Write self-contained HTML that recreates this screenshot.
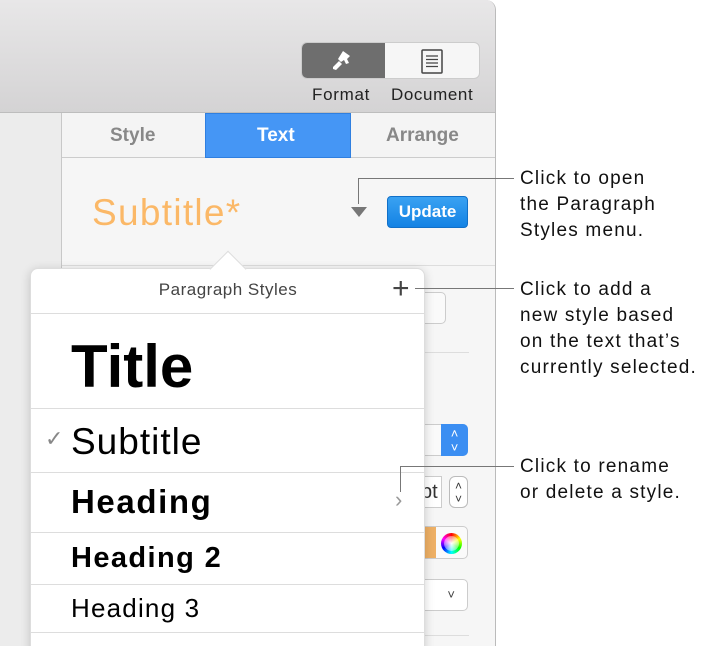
<!DOCTYPE html>
<html><head><style>
*{margin:0;padding:0;box-sizing:border-box}
html,body{width:702px;height:646px;overflow:hidden}
body{background:#fff;position:relative;font-family:"Liberation Sans",sans-serif}
.a{position:absolute}
.ann{position:absolute;left:520px;font-size:19px;line-height:26px;color:#111;letter-spacing:1.2px}
.ln{position:absolute;background:#777}
.row{position:absolute;left:0;width:394px;border-top:1px solid #ddd;color:#000}
</style></head><body>
<div class="a" style="left:0;top:0;width:496px;height:646px;border-right:1px solid #bbb;border-top-right-radius:10px;overflow:hidden;background:#ececec">
 <div class="a" style="left:0;top:0;width:496px;height:113px;background:linear-gradient(#e8e7e8,#d4d3d4);border-bottom:1px solid #bdbdbd"></div>
 <div class="a" style="left:301px;top:42px;width:179px;height:37px;border-radius:6px;background:#f6f6f6;border:1px solid #ccc;overflow:hidden">
  <div class="a" style="left:0;top:0;width:83px;height:37px;background:#6e6e6e"></div>
  <svg class="a" style="left:28px;top:6px" width="26" height="24" viewBox="0 0 26 24"><path d="M13 2l7 5-3 3 2 4-3 1-2-4-3 2-3-3zM9 12l3 3-6 6-3-1 0-2z" fill="#fff"/></svg>
  <svg class="a" style="left:118px;top:5px" width="24" height="28" viewBox="0 0 24 28"><rect x="2" y="2" width="20" height="23" fill="none" stroke="#444" stroke-width="1.5" rx="1"/><path d="M6 8h12M6 11.5h12M6 15h12M6 18.5h12" stroke="#444" stroke-width="1.3"/></svg>
 </div>
 <div class="a" style="left:312px;top:85px;font-size:17px;color:#222;letter-spacing:0.7px">Format</div>
 <div class="a" style="left:391px;top:85px;font-size:17px;color:#222;letter-spacing:0.6px">Document</div>
 <div class="a" style="left:61px;top:113px;width:435px;height:533px;background:#f6f6f6;border-left:1px solid #c8c8c8"></div>
 <div class="a" style="left:62px;top:113px;width:434px;height:45px;background:#f4f4f4;border-bottom:1px solid #ccc"></div>
 <div class="a" style="left:110px;top:125px;font-size:19px;font-weight:bold;color:#888">Style</div>
 <div class="a" style="left:205px;top:113px;width:146px;height:45px;background:#4596f5;border:1px solid #2f7fe0"></div>
 <div class="a" style="left:257px;top:125px;font-size:19px;font-weight:bold;color:#fff">Text</div>
 <div class="a" style="left:386px;top:125px;font-size:19px;font-weight:bold;color:#888">Arrange</div>
 <div class="a" style="left:92px;top:192px;font-size:37px;color:#fbb867;letter-spacing:1.3px">Subtitle*</div>
 <div class="a" style="left:351px;top:207px;width:0;height:0;border-left:8px solid transparent;border-right:8px solid transparent;border-top:10px solid #777"></div>
 <div class="a" style="left:387px;top:196px;width:81px;height:32px;border-radius:4px;background:linear-gradient(#3aa2f2,#1382e4);border:1px solid #1170c8;color:#fff;font-weight:bold;font-size:17px;text-align:center;line-height:30px">Update</div>
 <div class="a" style="left:62px;top:265px;width:434px;height:1px;background:#ddd"></div>
 <div class="a" style="left:415px;top:292px;width:31px;height:32px;border:1px solid #ccc;border-radius:5px;background:#fafafa"></div>
 <div class="a" style="left:424px;top:352px;width:45px;height:1px;background:#ddd"></div>
 <div class="a" style="left:420px;top:424px;width:48px;height:32px;border:1px solid #ccc;border-radius:5px;background:#fafafa"></div>
 <div class="a" style="left:441px;top:424px;width:27px;height:32px;border-radius:0 5px 5px 0;background:#3b8ef2;color:#fff;font-size:13px;text-align:center;line-height:14px;padding-top:3px">&#708;<br>&#709;</div>
 <div class="a" style="left:420px;top:476px;width:22px;height:32px;border:1px solid #ccc;background:#fff;font-size:20px;line-height:30px;color:#333">pt</div>
 <div class="a" style="left:449px;top:476px;width:19px;height:32px;border:1px solid #bbb;border-radius:6px;background:#fff;font-size:12px;text-align:center;line-height:13px;padding-top:3px;color:#333">&#708;<br>&#709;</div>
 <div class="a" style="left:420px;top:526px;width:48px;height:33px;border:1px solid #ccc;border-radius:5px;background:#fafafa;overflow:hidden"><div class="a" style="left:0;top:0;width:15px;height:33px;background:#eeb065"></div></div>
 <div class="a" style="left:441px;top:533px;width:21px;height:21px;border-radius:50%;background:conic-gradient(red,yellow,lime,cyan,blue,magenta,red)"><div class="a" style="left:3px;top:3px;width:15px;height:15px;border-radius:50%;background:radial-gradient(#fff,rgba(255,255,255,.2))"></div></div>
 <div class="a" style="left:420px;top:579px;width:48px;height:32px;border:1px solid #ccc;border-radius:5px;background:#fff;font-size:13px;text-align:right;padding-right:12px;line-height:30px;color:#444">&#709;</div>
 <div class="a" style="left:424px;top:635px;width:45px;height:1px;background:#ddd"></div>
</div>
<div class="a" style="left:30px;top:268px;width:395px;height:390px;background:#fff;border:1px solid #ddd;border-radius:8px;box-shadow:0 2px 10px rgba(0,0,0,.18)">
 <div class="a" style="left:0;top:11px;width:394px;text-align:center;font-size:17px;color:#444;letter-spacing:0.5px">Paragraph Styles</div>
 <div class="a" style="left:361px;top:5px;font-size:30px;line-height:30px;color:#444">+</div>
 <div class="row" style="top:44px;height:96px"><div class="a" style="left:40px;top:18px;font-size:60px;font-weight:bold">Title</div></div>
 <div class="row" style="top:139px;height:64px"><div class="a" style="left:14px;top:17px;font-size:22px;color:#888">&#10003;</div><div class="a" style="left:40px;top:12px;font-size:37px;letter-spacing:1px">Subtitle</div></div>
 <div class="row" style="top:203px;height:60px"><div class="a" style="left:40px;top:10px;font-size:33px;font-weight:bold;letter-spacing:1.6px">Heading</div><div class="a" style="left:364px;top:14px;font-size:22px;color:#999">&#8250;</div></div>
 <div class="row" style="top:263px;height:52px"><div class="a" style="left:40px;top:9px;font-size:29px;font-weight:bold;letter-spacing:1.4px">Heading 2</div></div>
 <div class="row" style="top:315px;height:48px"><div class="a" style="left:40px;top:8px;font-size:26px;letter-spacing:1.2px">Heading 3</div></div>
 <div class="row" style="top:363px;height:20px"></div>
</div>
<div class="a" style="width:26px;height:26px;background:#fff;transform:rotate(45deg);top:256px;left:215px;border-left:1px solid #ddd;border-top:1px solid #ddd"></div>
<div class="ln" style="left:358px;top:178px;width:156px;height:1px"></div>
<div class="ln" style="left:358px;top:178px;width:1px;height:26px"></div>
<div class="ln" style="left:415px;top:288px;width:99px;height:1px"></div>
<div class="ln" style="left:400px;top:466px;width:114px;height:1px"></div>
<div class="ln" style="left:400px;top:466px;width:1px;height:26px"></div>
<div class="ann" style="top:166px">Click to open<br>the Paragraph<br>Styles menu.</div>
<div class="ann" style="top:277px">Click to add a<br>new style based<br>on the text that’s<br>currently selected.</div>
<div class="ann" style="top:454px">Click to rename<br>or delete a style.</div>
</body></html>
